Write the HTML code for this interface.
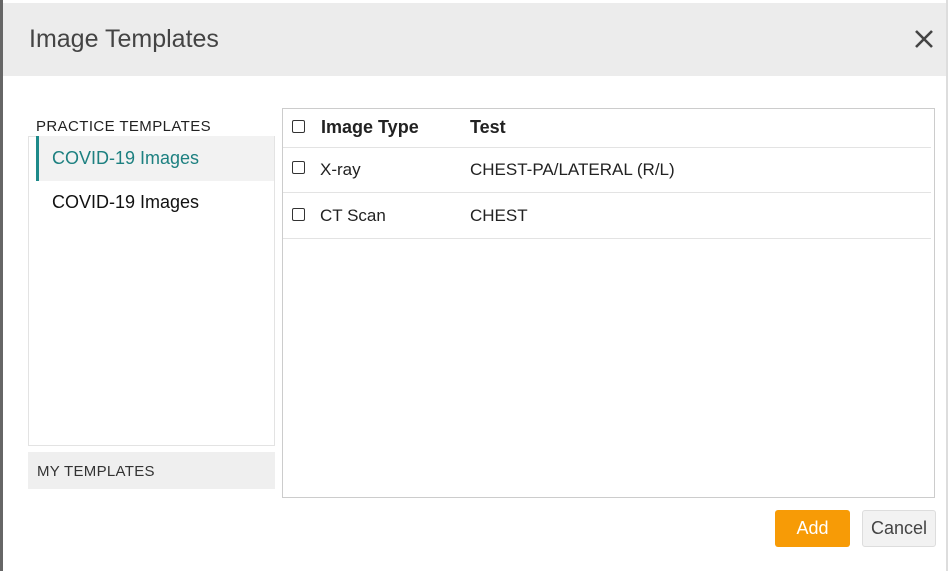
<!DOCTYPE html>
<html><head><style>
*{margin:0;padding:0;box-sizing:border-box}
body{width:948px;height:571px;background:#fff;font-family:"Liberation Sans",sans-serif;position:relative;overflow:hidden;color:#222}
.a{position:absolute}
.cb{position:absolute;width:13px;height:13px;border:1px solid #333;border-radius:2px;background:#fff}
</style></head><body>
<div class="a" style="left:0;top:0;width:3px;height:571px;background:#666"></div>
<div class="a" style="left:3px;top:3px;width:943px;height:73px;background:#ececec"></div>
<div class="a" style="left:946px;top:0;width:2px;height:571px;background:#ddd"></div>
<div class="a" style="left:29px;top:25px;font-size:25px;color:#444">Image Templates</div>
<svg class="a" style="left:913px;top:28px" width="22" height="22"><path d="M3 3L19 19M19 3L3 19" stroke="#444" stroke-width="2.6"/></svg>
<div class="a" style="left:36px;top:118px;font-size:15px;letter-spacing:.4px;color:#222">PRACTICE TEMPLATES</div>
<div class="a" style="left:28px;top:136px;width:247px;height:310px;border:1px solid #e3e3e3"></div>
<div class="a" style="left:36px;top:136px;width:238px;height:45px;background:#f2f2f2;border-left:3px solid #1d8a8a"></div>
<div class="a" style="left:52px;top:148px;font-size:18px;color:#1d8080">COVID-19 Images</div>
<div class="a" style="left:52px;top:192px;font-size:18px;color:#111">COVID-19 Images</div>
<div class="a" style="left:28px;top:452px;width:247px;height:37px;background:#efefef"></div>
<div class="a" style="left:37px;top:463px;font-size:15px;letter-spacing:.3px;color:#333">MY TEMPLATES</div>
<div class="a" style="left:282px;top:108px;width:653px;height:390px;border:1px solid #ccc"></div>
<div class="a" style="left:283px;top:147px;width:648px;height:1px;background:#e3e3e3"></div>
<div class="a" style="left:283px;top:192px;width:648px;height:1px;background:#e3e3e3"></div>
<div class="a" style="left:283px;top:238px;width:648px;height:1px;background:#e3e3e3"></div>
<div class="cb" style="left:292px;top:120px"></div>
<div class="a" style="left:321px;top:117px;font-size:18px;font-weight:bold;color:#222">Image Type</div>
<div class="a" style="left:470px;top:117px;font-size:18px;font-weight:bold;color:#222">Test</div>
<div class="cb" style="left:292px;top:161px"></div>
<div class="a" style="left:320px;top:160px;font-size:17px">X-ray</div>
<div class="a" style="left:470px;top:160px;font-size:17px">CHEST-PA/LATERAL (R/L)</div>
<div class="cb" style="left:292px;top:208px"></div>
<div class="a" style="left:320px;top:206px;font-size:17px">CT Scan</div>
<div class="a" style="left:470px;top:206px;font-size:17px">CHEST</div>
<div class="a" style="left:775px;top:510px;width:75px;height:37px;background:#f79b06;border-radius:3px;color:#fff;font-size:18px;text-align:center;line-height:37px">Add</div>
<div class="a" style="left:862px;top:510px;width:74px;height:37px;background:#f2f2f2;border:1px solid #ddd;border-radius:3px;color:#444;font-size:18px;text-align:center;line-height:35px">Cancel</div>
</body></html>
